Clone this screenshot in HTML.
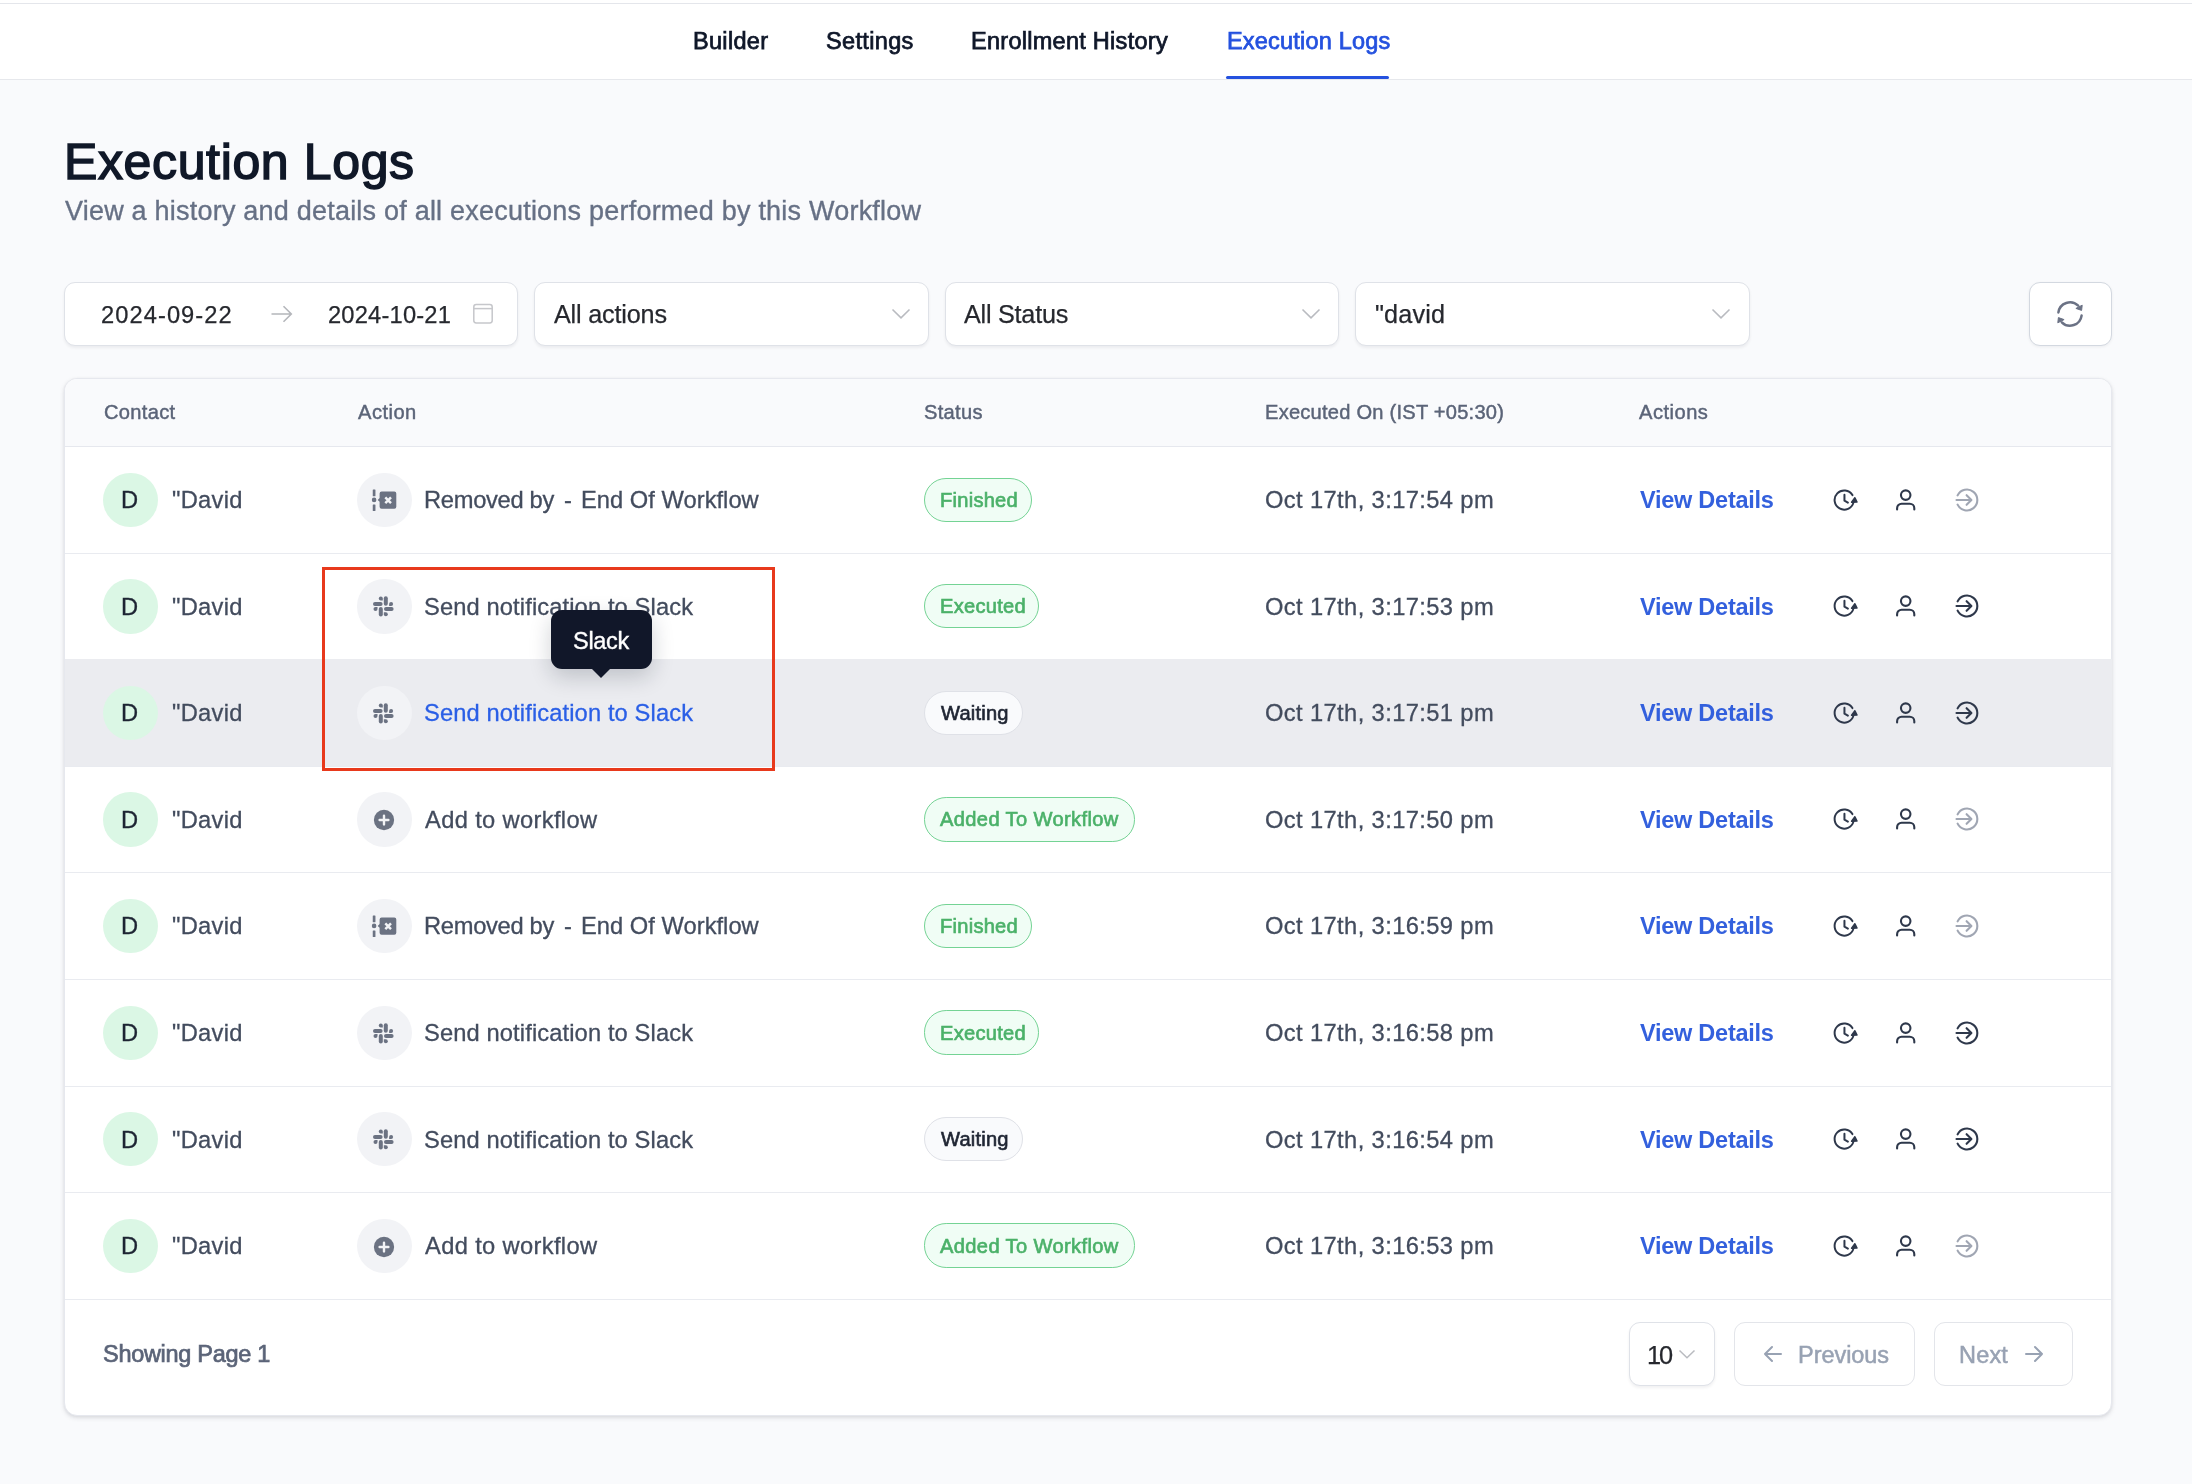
<!DOCTYPE html><html lang="en"><head><meta charset="utf-8"><title>Execution Logs</title><style>
*{box-sizing:border-box;margin:0;padding:0}
html,body{width:2192px;height:1484px;overflow:hidden}
body{background:#f9fafc;font-family:"Liberation Sans",sans-serif;position:relative;color:#344054}
.t{position:absolute;white-space:pre;display:block;will-change:transform}
.abs{position:absolute}
.nav{position:absolute;left:0;top:0;width:2192px;height:80px;background:#fff;border-top:1px solid #e9eaee;border-bottom:1px solid #e6e8ec}
.topstrip{position:absolute;left:0;top:0;width:2192px;height:3px;background:#fff}
.topline{position:absolute;left:0;top:3px;width:2192px;height:1px;background:#e4e6eb}
.uline{position:absolute;left:1226px;top:76px;width:163px;height:3.4px;background:#2451df;border-radius:2px}
.fbox{position:absolute;top:282px;height:64px;background:#fff;border:1px solid #dfe2e8;border-radius:11px;box-shadow:0 2px 3px rgba(16,24,40,.06)}
.card{position:absolute;left:64px;top:378px;width:2048px;height:1038px;background:#fff;border:1px solid #e6e8ee;border-radius:13px;box-shadow:0 2px 5px rgba(16,24,40,.10),0 1px 3px rgba(16,24,40,.06);overflow:hidden}
.thead{position:absolute;left:0;top:0;width:100%;height:68px;background:#f9fafc;border-bottom:1px solid #e6e8ee}
.rline{position:absolute;left:65px;width:2046px;height:1px;background:#e9ebf0}
.hover{position:absolute;left:65px;top:659px;width:2047px;height:108px;background:#ebecf0}
.av{position:absolute;width:54.4px;height:54.4px;border-radius:50%;background:#dbf7e5}
.ic{position:absolute;width:54.4px;height:54.4px;border-radius:50%;background:#f2f3f6}
.ic svg,.av svg{position:absolute;left:0;top:0}
.badge{position:absolute;height:44.4px;border-radius:22.2px;border:1.5px solid #74d394;background:#f0fdf5}
.badge.g{border:1px solid #dfe1e7;background:#f9fafc}
.btn{position:absolute;top:1322px;height:64px;background:#fff;border:1px solid #e3e5ea;border-radius:11px}
.red{position:absolute;left:322px;top:567px;width:453px;height:204px;border:3px solid #e8391c}
.tip{position:absolute;left:551.3px;top:610.2px;width:101px;height:58.6px;background:#111729;border-radius:11px;box-shadow:0 8px 22px rgba(16,24,40,.20)}
.tiparrow{position:absolute;left:591px;top:668.3px;width:0;height:0;border-left:10.5px solid transparent;border-right:10.5px solid transparent;border-top:10.7px solid #111729}
</style></head><body>
<div class="nav"></div><div class="topstrip"></div><div class="topline"></div>
<span id="t1" class="t " style="left:692.77px;top:25.32px;font-size:23.5px;line-height:33px;color:#0f1729;letter-spacing:0.308px;-webkit-text-stroke:0.75px #0f1729;">Builder</span>
<span id="t2" class="t " style="left:826.25px;top:25.32px;font-size:23.5px;line-height:33px;color:#0f1729;letter-spacing:0.348px;-webkit-text-stroke:0.75px #0f1729;">Settings</span>
<span id="t3" class="t " style="left:970.77px;top:25.32px;font-size:23.5px;line-height:33px;color:#0f1729;letter-spacing:0.274px;-webkit-text-stroke:0.75px #0f1729;">Enrollment History</span>
<span id="t4" class="t " style="left:1226.97px;top:25.32px;font-size:23.5px;line-height:33px;color:#2451df;letter-spacing:0.195px;-webkit-text-stroke:0.75px #2451df;">Execution Logs</span>
<div class="uline"></div>
<span id="t5" class="t " style="left:64.20px;top:127.18px;font-size:50px;line-height:70px;color:#101828;letter-spacing:0.631px;-webkit-text-stroke:1.5px #101828;">Execution Logs</span>
<span id="t6" class="t " style="left:65.29px;top:192.03px;font-size:27px;line-height:38px;color:#667085;letter-spacing:0.216px;-webkit-text-stroke:0.35px #667085;">View a history and details of all executions performed by this Workflow</span>
<div class="fbox" style="left:64px;width:454px"></div>
<div class="fbox" style="left:534px;width:395px"></div>
<div class="fbox" style="left:945px;width:394px"></div>
<div class="fbox" style="left:1355px;width:395px"></div>
<div class="fbox" style="left:2029px;width:83px;border-color:#d3d8e0;box-shadow:0 1px 3px rgba(16,24,40,.06)"></div>
<span id="t7" class="t " style="left:101.28px;top:298.52px;font-size:23.7px;line-height:33px;color:#26282e;letter-spacing:1.059px;-webkit-text-stroke:0.25px #26282e;">2024-09-22</span>
<span id="t8" class="t " style="left:327.68px;top:298.52px;font-size:23.7px;line-height:33px;color:#26282e;letter-spacing:0.190px;-webkit-text-stroke:0.25px #26282e;">2024-10-21</span>
<span id="t9" class="t " style="left:553.98px;top:296.74px;font-size:25.2px;line-height:35px;color:#26282e;letter-spacing:-0.179px;-webkit-text-stroke:0.25px #26282e;">All actions</span>
<span id="t10" class="t " style="left:963.98px;top:296.74px;font-size:25.2px;line-height:35px;color:#26282e;letter-spacing:-0.236px;-webkit-text-stroke:0.25px #26282e;">All Status</span>
<span id="t11" class="t " style="left:1374.74px;top:296.74px;font-size:25.2px;line-height:35px;color:#26282e;letter-spacing:0.166px;-webkit-text-stroke:0.25px #26282e;">"david</span>
<svg class="abs" style="left:270px;top:303px" width="24" height="22" viewBox="0 0 24 22"><path d="M1.5 11H21M13.5 3.2 21.3 11 13.5 18.8" fill="none" stroke="#b4b6bb" stroke-width="1.6" stroke-linecap="butt" stroke-linejoin="miter"/></svg>
<svg class="abs" style="left:471px;top:302px" width="24" height="24" viewBox="0 0 24 24"><rect x="2.8" y="2.5" width="18.4" height="18.5" rx="2.4" fill="none" stroke="#c6c7cb" stroke-width="1.5"/><path d="M2.8 6.6H21.2" stroke="#c6c7cb" stroke-width="1.5"/></svg>
<svg class="abs" style="left:890.5px;top:308px" width="20" height="12" viewBox="0 0 20 12"><path d="M1.5 1.5 10 9.8 18.5 1.5" fill="none" stroke="#b9bbc0" stroke-width="1.6"/></svg>
<svg class="abs" style="left:1300.5px;top:308px" width="20" height="12" viewBox="0 0 20 12"><path d="M1.5 1.5 10 9.8 18.5 1.5" fill="none" stroke="#b9bbc0" stroke-width="1.6"/></svg>
<svg class="abs" style="left:1711px;top:308px" width="20" height="12" viewBox="0 0 20 12"><path d="M1.5 1.5 10 9.8 18.5 1.5" fill="none" stroke="#b9bbc0" stroke-width="1.6"/></svg>
<svg class="abs" style="left:2050px;top:294px" width="40" height="40" viewBox="-20 -20 40 40"><g fill="none" stroke="#6b7285" stroke-width="2.5" stroke-linecap="round"><path d="M-11.6 -1.6A11.7 11.7 0 0 1 8.2 -8.3"/><path d="M11.6 1.6A11.7 11.7 0 0 1 -8.2 8.3"/></g><g fill="#6b7285" stroke="#6b7285" stroke-width="1" stroke-linejoin="round"><path d="M5.9 -5.6 12.2 -8.8 11.6 -3.6z"/><path d="M-5.9 5.6-12.2 8.8-11.6 3.6z"/></g></svg>
<div class="card"><div class="thead"></div></div>
<span id="t12" class="t " style="left:103.82px;top:397.95px;font-size:20.1px;line-height:28px;color:#5b6478;letter-spacing:0.312px;-webkit-text-stroke:0.45px #5b6478;">Contact</span>
<span id="t13" class="t " style="left:358.33px;top:397.95px;font-size:20.1px;line-height:28px;color:#5b6478;letter-spacing:0.488px;-webkit-text-stroke:0.45px #5b6478;">Action</span>
<span id="t14" class="t " style="left:924.03px;top:397.95px;font-size:20.1px;line-height:28px;color:#5b6478;letter-spacing:0.300px;-webkit-text-stroke:0.45px #5b6478;">Status</span>
<span id="t15" class="t " style="left:1264.64px;top:397.95px;font-size:20.1px;line-height:28px;color:#5b6478;letter-spacing:0.231px;-webkit-text-stroke:0.45px #5b6478;">Executed On (IST +05:30)</span>
<span id="t16" class="t " style="left:1639.33px;top:397.95px;font-size:20.1px;line-height:28px;color:#5b6478;letter-spacing:0.494px;-webkit-text-stroke:0.45px #5b6478;">Actions</span>
<div class="hover"></div>
<div class="rline" style="top:553px"></div>
<div class="rline" style="top:766px"></div>
<div class="rline" style="top:872px"></div>
<div class="rline" style="top:979px"></div>
<div class="rline" style="top:1086px"></div>
<div class="rline" style="top:1192px"></div>
<div class="rline" style="top:1299px"></div>
<div class="av" style="left:103.3px;top:472.7px"></div>
<span id="t17" class="t " style="left:121.42px;top:484.14px;font-size:23.7px;line-height:33px;color:#1d2433;letter-spacing:0.000px;-webkit-text-stroke:0.3px #1d2433;">D</span>
<span id="t18" class="t " style="left:171.62px;top:484.14px;font-size:23.7px;line-height:33px;color:#434c5e;letter-spacing:0.295px;-webkit-text-stroke:0.3px #434c5e;">"David</span>
<div class="ic" style="left:357.3px;top:472.7px"><svg width="55" height="55" viewBox="0 0 55 55"><g fill="#6b7282"><rect x="15.75" y="16.4" width="2.7" height="6.75" rx=".5"/><circle cx="17.1" cy="26.9" r="2.3"/><rect x="15.75" y="31.5" width="2.7" height="6.6" rx=".5"/><path d="M24.6 18.6h12.7a2 2 0 0 1 2 2v13.2a2 2 0 0 1-2 2H24.6a2 2 0 0 1-2-2v-5.1l-1.9-1.8 1.9-1.8v-4.5a2 2 0 0 1 2-2z"/></g><path d="M28.3 24.4 34 30.1M34 24.4 28.3 30.1" stroke="#f2f3f6" stroke-width="2.5" fill="none"/></svg></div>
<span id="t19" class="t " style="left:423.73px;top:484.14px;font-size:23.7px;line-height:33px;color:#434c5e;letter-spacing:-0.293px;-webkit-text-stroke:0.3px #434c5e;">Removed by</span>
<span id="t20" class="t " style="left:563.62px;top:484.14px;font-size:23.7px;line-height:33px;color:#434c5e;letter-spacing:0.000px;-webkit-text-stroke:0.3px #434c5e;">-</span>
<span id="t21" class="t " style="left:581.21px;top:484.14px;font-size:23.7px;line-height:33px;color:#434c5e;letter-spacing:0.032px;-webkit-text-stroke:0.3px #434c5e;">End Of Workflow</span>
<div class="badge" style="left:924px;top:477.5px;width:108px"></div>
<span id="t22" class="t " style="left:939.82px;top:486.15px;font-size:20.1px;line-height:28px;color:#4bb169;letter-spacing:0.253px;-webkit-text-stroke:0.65px #4bb169;">Finished</span>
<span id="t23" class="t " style="left:1264.69px;top:484.14px;font-size:23.7px;line-height:33px;color:#434c5e;letter-spacing:0.391px;-webkit-text-stroke:0.3px #434c5e;">Oct 17th, 3:17:54 pm</span>
<span id="t24" class="t " style="left:1639.85px;top:484.14px;font-size:23.5px;line-height:33px;color:#3360dd;letter-spacing:-0.257px;font-weight:bold;">View Details</span>
<svg class="abs" style="left:1830px;top:484.7px" width="30" height="30" viewBox="0 0 30 30" fill="none" stroke="#2e384b" stroke-width="2.0" stroke-linecap="round" stroke-linejoin="round"><path d="M22.43 10.11A9.6 9.6 0 1 0 23.51 17.37"/><path d="M14.45 9.85V15.65L17.9 17.6"/><path d="M24.9 12.7 21.6 17.3 27 17.1z" fill="#2e384b" stroke-width="1.5"/></svg><svg class="abs" style="left:1891px;top:484.7px" width="30" height="30" viewBox="0 0 30 30" fill="none" stroke="#2e384b" stroke-width="2.1" stroke-linecap="round" stroke-linejoin="round"><circle cx="14.7" cy="10.1" r="4.75"/><path d="M6.1 24.4v-1.2a4.5 4.5 0 0 1 4.5-4.5h8.2a4.5 4.5 0 0 1 4.5 4.5v1.2"/></svg><svg class="abs" style="left:1952px;top:484.7px" width="30" height="30" viewBox="0 0 30 30" fill="none" stroke="#a0a6b3" stroke-width="2.1" stroke-linecap="round" stroke-linejoin="round"><path d="M5.6 10.4a10.4 10.4 0 1 1 0 9.2"/><path d="M4.5 15h14.6M14.6 10.2l4.8 4.8-4.8 4.8"/></svg>
<div class="av" style="left:103.3px;top:579.2px"></div>
<span id="t25" class="t " style="left:121.42px;top:591.14px;font-size:23.7px;line-height:33px;color:#1d2433;letter-spacing:0.000px;-webkit-text-stroke:0.3px #1d2433;">D</span>
<span id="t26" class="t " style="left:171.62px;top:591.14px;font-size:23.7px;line-height:33px;color:#434c5e;letter-spacing:0.295px;-webkit-text-stroke:0.3px #434c5e;">"David</span>
<div class="ic" style="left:357.3px;top:579.2px"><svg width="55" height="55" viewBox="0 0 55 55"><g fill="#6b7282" transform="translate(-1.2 -0.2)"><rect x="28.0" y="17.5" width="4.0" height="9.4" rx="2"/><rect x="23.0" y="28.3" width="4.0" height="9.4" rx="2"/><rect x="17.2" y="23.1" width="9.6" height="4.0" rx="2"/><rect x="28.2" y="28.1" width="9.6" height="4.0" rx="2"/><path d="M27 21.7h-2a2 2 0 1 1 2-2z"/><path d="M33.3 27.1v-2a2 2 0 1 1 2 2z"/><path d="M28 33.5h2a2 2 0 1 1-2 2z"/><path d="M21.7 28.1v2a2 2 0 1 1-2-2z"/></g></svg></div>
<span id="t27" class="t " style="left:423.71px;top:591.14px;font-size:23.7px;line-height:33px;color:#434c5e;letter-spacing:0.121px;-webkit-text-stroke:0.3px #434c5e;">Send notification to Slack</span>
<div class="badge" style="left:924px;top:584px;width:115px"></div>
<span id="t28" class="t " style="left:939.82px;top:592.15px;font-size:20.1px;line-height:28px;color:#4bb169;letter-spacing:0.277px;-webkit-text-stroke:0.65px #4bb169;">Executed</span>
<span id="t29" class="t " style="left:1264.69px;top:591.14px;font-size:23.7px;line-height:33px;color:#434c5e;letter-spacing:0.391px;-webkit-text-stroke:0.3px #434c5e;">Oct 17th, 3:17:53 pm</span>
<span id="t30" class="t " style="left:1639.85px;top:591.14px;font-size:23.5px;line-height:33px;color:#3360dd;letter-spacing:-0.257px;font-weight:bold;">View Details</span>
<svg class="abs" style="left:1830px;top:591.2px" width="30" height="30" viewBox="0 0 30 30" fill="none" stroke="#2e384b" stroke-width="2.0" stroke-linecap="round" stroke-linejoin="round"><path d="M22.43 10.11A9.6 9.6 0 1 0 23.51 17.37"/><path d="M14.45 9.85V15.65L17.9 17.6"/><path d="M24.9 12.7 21.6 17.3 27 17.1z" fill="#2e384b" stroke-width="1.5"/></svg><svg class="abs" style="left:1891px;top:591.2px" width="30" height="30" viewBox="0 0 30 30" fill="none" stroke="#2e384b" stroke-width="2.1" stroke-linecap="round" stroke-linejoin="round"><circle cx="14.7" cy="10.1" r="4.75"/><path d="M6.1 24.4v-1.2a4.5 4.5 0 0 1 4.5-4.5h8.2a4.5 4.5 0 0 1 4.5 4.5v1.2"/></svg><svg class="abs" style="left:1952px;top:591.2px" width="30" height="30" viewBox="0 0 30 30" fill="none" stroke="#2e384b" stroke-width="2.1" stroke-linecap="round" stroke-linejoin="round"><path d="M5.6 10.4a10.4 10.4 0 1 1 0 9.2"/><path d="M4.5 15h14.6M14.6 10.2l4.8 4.8-4.8 4.8"/></svg>
<div class="av" style="left:103.3px;top:685.8px"></div>
<span id="t31" class="t " style="left:121.42px;top:697.04px;font-size:23.7px;line-height:33px;color:#1d2433;letter-spacing:0.000px;-webkit-text-stroke:0.3px #1d2433;">D</span>
<span id="t32" class="t " style="left:171.62px;top:697.04px;font-size:23.7px;line-height:33px;color:#434c5e;letter-spacing:0.295px;-webkit-text-stroke:0.3px #434c5e;">"David</span>
<div class="ic" style="left:357.3px;top:685.8px"><svg width="55" height="55" viewBox="0 0 55 55"><g fill="#6b7282" transform="translate(-1.2 -0.2)"><rect x="28.0" y="17.5" width="4.0" height="9.4" rx="2"/><rect x="23.0" y="28.3" width="4.0" height="9.4" rx="2"/><rect x="17.2" y="23.1" width="9.6" height="4.0" rx="2"/><rect x="28.2" y="28.1" width="9.6" height="4.0" rx="2"/><path d="M27 21.7h-2a2 2 0 1 1 2-2z"/><path d="M33.3 27.1v-2a2 2 0 1 1 2 2z"/><path d="M28 33.5h2a2 2 0 1 1-2 2z"/><path d="M21.7 28.1v2a2 2 0 1 1-2-2z"/></g></svg></div>
<span id="t33" class="t " style="left:423.71px;top:697.04px;font-size:23.7px;line-height:33px;color:#2a5fe6;letter-spacing:0.121px;-webkit-text-stroke:0.3px #2a5fe6;">Send notification to Slack</span>
<div class="badge g" style="left:924px;top:690.6px;width:99px"></div>
<span id="t34" class="t " style="left:940.90px;top:698.75px;font-size:20.1px;line-height:28px;color:#1f2533;letter-spacing:0.213px;-webkit-text-stroke:0.65px #1f2533;">Waiting</span>
<span id="t35" class="t " style="left:1264.69px;top:697.04px;font-size:23.7px;line-height:33px;color:#434c5e;letter-spacing:0.391px;-webkit-text-stroke:0.3px #434c5e;">Oct 17th, 3:17:51 pm</span>
<span id="t36" class="t " style="left:1639.85px;top:697.04px;font-size:23.5px;line-height:33px;color:#3360dd;letter-spacing:-0.257px;font-weight:bold;">View Details</span>
<svg class="abs" style="left:1830px;top:697.8px" width="30" height="30" viewBox="0 0 30 30" fill="none" stroke="#2e384b" stroke-width="2.0" stroke-linecap="round" stroke-linejoin="round"><path d="M22.43 10.11A9.6 9.6 0 1 0 23.51 17.37"/><path d="M14.45 9.85V15.65L17.9 17.6"/><path d="M24.9 12.7 21.6 17.3 27 17.1z" fill="#2e384b" stroke-width="1.5"/></svg><svg class="abs" style="left:1891px;top:697.8px" width="30" height="30" viewBox="0 0 30 30" fill="none" stroke="#2e384b" stroke-width="2.1" stroke-linecap="round" stroke-linejoin="round"><circle cx="14.7" cy="10.1" r="4.75"/><path d="M6.1 24.4v-1.2a4.5 4.5 0 0 1 4.5-4.5h8.2a4.5 4.5 0 0 1 4.5 4.5v1.2"/></svg><svg class="abs" style="left:1952px;top:697.8px" width="30" height="30" viewBox="0 0 30 30" fill="none" stroke="#2e384b" stroke-width="2.1" stroke-linecap="round" stroke-linejoin="round"><path d="M5.6 10.4a10.4 10.4 0 1 1 0 9.2"/><path d="M4.5 15h14.6M14.6 10.2l4.8 4.8-4.8 4.8"/></svg>
<div class="av" style="left:103.3px;top:792.4px"></div>
<span id="t37" class="t " style="left:121.42px;top:804.34px;font-size:23.7px;line-height:33px;color:#1d2433;letter-spacing:0.000px;-webkit-text-stroke:0.3px #1d2433;">D</span>
<span id="t38" class="t " style="left:171.62px;top:804.34px;font-size:23.7px;line-height:33px;color:#434c5e;letter-spacing:0.295px;-webkit-text-stroke:0.3px #434c5e;">"David</span>
<div class="ic" style="left:357.3px;top:792.4px"><svg width="55" height="55" viewBox="0 0 55 55"><circle cx="27.0" cy="28.0" r="10.15" fill="#6b7282"/><path d="M27 23.6v8.8M22.6 28h8.8" stroke="#f2f3f6" stroke-width="2.4" stroke-linecap="round"/></svg></div>
<span id="t39" class="t " style="left:424.86px;top:804.34px;font-size:23.7px;line-height:33px;color:#434c5e;letter-spacing:0.350px;-webkit-text-stroke:0.3px #434c5e;">Add to workflow</span>
<div class="badge" style="left:924px;top:797.2px;width:211px"></div>
<span id="t40" class="t " style="left:940.35px;top:805.35px;font-size:20.1px;line-height:28px;color:#4bb169;letter-spacing:0.373px;-webkit-text-stroke:0.65px #4bb169;">Added To Workflow</span>
<span id="t41" class="t " style="left:1264.69px;top:804.34px;font-size:23.7px;line-height:33px;color:#434c5e;letter-spacing:0.391px;-webkit-text-stroke:0.3px #434c5e;">Oct 17th, 3:17:50 pm</span>
<span id="t42" class="t " style="left:1639.85px;top:804.34px;font-size:23.5px;line-height:33px;color:#3360dd;letter-spacing:-0.257px;font-weight:bold;">View Details</span>
<svg class="abs" style="left:1830px;top:804.4px" width="30" height="30" viewBox="0 0 30 30" fill="none" stroke="#2e384b" stroke-width="2.0" stroke-linecap="round" stroke-linejoin="round"><path d="M22.43 10.11A9.6 9.6 0 1 0 23.51 17.37"/><path d="M14.45 9.85V15.65L17.9 17.6"/><path d="M24.9 12.7 21.6 17.3 27 17.1z" fill="#2e384b" stroke-width="1.5"/></svg><svg class="abs" style="left:1891px;top:804.4px" width="30" height="30" viewBox="0 0 30 30" fill="none" stroke="#2e384b" stroke-width="2.1" stroke-linecap="round" stroke-linejoin="round"><circle cx="14.7" cy="10.1" r="4.75"/><path d="M6.1 24.4v-1.2a4.5 4.5 0 0 1 4.5-4.5h8.2a4.5 4.5 0 0 1 4.5 4.5v1.2"/></svg><svg class="abs" style="left:1952px;top:804.4px" width="30" height="30" viewBox="0 0 30 30" fill="none" stroke="#a0a6b3" stroke-width="2.1" stroke-linecap="round" stroke-linejoin="round"><path d="M5.6 10.4a10.4 10.4 0 1 1 0 9.2"/><path d="M4.5 15h14.6M14.6 10.2l4.8 4.8-4.8 4.8"/></svg>
<div class="av" style="left:103.3px;top:898.9px"></div>
<span id="t43" class="t " style="left:121.42px;top:910.34px;font-size:23.7px;line-height:33px;color:#1d2433;letter-spacing:0.000px;-webkit-text-stroke:0.3px #1d2433;">D</span>
<span id="t44" class="t " style="left:171.62px;top:910.34px;font-size:23.7px;line-height:33px;color:#434c5e;letter-spacing:0.295px;-webkit-text-stroke:0.3px #434c5e;">"David</span>
<div class="ic" style="left:357.3px;top:898.9px"><svg width="55" height="55" viewBox="0 0 55 55"><g fill="#6b7282"><rect x="15.75" y="16.4" width="2.7" height="6.75" rx=".5"/><circle cx="17.1" cy="26.9" r="2.3"/><rect x="15.75" y="31.5" width="2.7" height="6.6" rx=".5"/><path d="M24.6 18.6h12.7a2 2 0 0 1 2 2v13.2a2 2 0 0 1-2 2H24.6a2 2 0 0 1-2-2v-5.1l-1.9-1.8 1.9-1.8v-4.5a2 2 0 0 1 2-2z"/></g><path d="M28.3 24.4 34 30.1M34 24.4 28.3 30.1" stroke="#f2f3f6" stroke-width="2.5" fill="none"/></svg></div>
<span id="t45" class="t " style="left:423.73px;top:910.34px;font-size:23.7px;line-height:33px;color:#434c5e;letter-spacing:-0.293px;-webkit-text-stroke:0.3px #434c5e;">Removed by</span>
<span id="t46" class="t " style="left:563.62px;top:910.34px;font-size:23.7px;line-height:33px;color:#434c5e;letter-spacing:0.000px;-webkit-text-stroke:0.3px #434c5e;">-</span>
<span id="t47" class="t " style="left:581.21px;top:910.34px;font-size:23.7px;line-height:33px;color:#434c5e;letter-spacing:0.032px;-webkit-text-stroke:0.3px #434c5e;">End Of Workflow</span>
<div class="badge" style="left:924px;top:903.7px;width:108px"></div>
<span id="t48" class="t " style="left:939.82px;top:912.35px;font-size:20.1px;line-height:28px;color:#4bb169;letter-spacing:0.253px;-webkit-text-stroke:0.65px #4bb169;">Finished</span>
<span id="t49" class="t " style="left:1264.69px;top:910.34px;font-size:23.7px;line-height:33px;color:#434c5e;letter-spacing:0.391px;-webkit-text-stroke:0.3px #434c5e;">Oct 17th, 3:16:59 pm</span>
<span id="t50" class="t " style="left:1639.85px;top:910.34px;font-size:23.5px;line-height:33px;color:#3360dd;letter-spacing:-0.257px;font-weight:bold;">View Details</span>
<svg class="abs" style="left:1830px;top:910.9px" width="30" height="30" viewBox="0 0 30 30" fill="none" stroke="#2e384b" stroke-width="2.0" stroke-linecap="round" stroke-linejoin="round"><path d="M22.43 10.11A9.6 9.6 0 1 0 23.51 17.37"/><path d="M14.45 9.85V15.65L17.9 17.6"/><path d="M24.9 12.7 21.6 17.3 27 17.1z" fill="#2e384b" stroke-width="1.5"/></svg><svg class="abs" style="left:1891px;top:910.9px" width="30" height="30" viewBox="0 0 30 30" fill="none" stroke="#2e384b" stroke-width="2.1" stroke-linecap="round" stroke-linejoin="round"><circle cx="14.7" cy="10.1" r="4.75"/><path d="M6.1 24.4v-1.2a4.5 4.5 0 0 1 4.5-4.5h8.2a4.5 4.5 0 0 1 4.5 4.5v1.2"/></svg><svg class="abs" style="left:1952px;top:910.9px" width="30" height="30" viewBox="0 0 30 30" fill="none" stroke="#a0a6b3" stroke-width="2.1" stroke-linecap="round" stroke-linejoin="round"><path d="M5.6 10.4a10.4 10.4 0 1 1 0 9.2"/><path d="M4.5 15h14.6M14.6 10.2l4.8 4.8-4.8 4.8"/></svg>
<div class="av" style="left:103.3px;top:1005.5px"></div>
<span id="t51" class="t " style="left:121.42px;top:1016.94px;font-size:23.7px;line-height:33px;color:#1d2433;letter-spacing:0.000px;-webkit-text-stroke:0.3px #1d2433;">D</span>
<span id="t52" class="t " style="left:171.62px;top:1016.94px;font-size:23.7px;line-height:33px;color:#434c5e;letter-spacing:0.295px;-webkit-text-stroke:0.3px #434c5e;">"David</span>
<div class="ic" style="left:357.3px;top:1005.5px"><svg width="55" height="55" viewBox="0 0 55 55"><g fill="#6b7282" transform="translate(-1.2 -0.2)"><rect x="28.0" y="17.5" width="4.0" height="9.4" rx="2"/><rect x="23.0" y="28.3" width="4.0" height="9.4" rx="2"/><rect x="17.2" y="23.1" width="9.6" height="4.0" rx="2"/><rect x="28.2" y="28.1" width="9.6" height="4.0" rx="2"/><path d="M27 21.7h-2a2 2 0 1 1 2-2z"/><path d="M33.3 27.1v-2a2 2 0 1 1 2 2z"/><path d="M28 33.5h2a2 2 0 1 1-2 2z"/><path d="M21.7 28.1v2a2 2 0 1 1-2-2z"/></g></svg></div>
<span id="t53" class="t " style="left:423.71px;top:1016.94px;font-size:23.7px;line-height:33px;color:#434c5e;letter-spacing:0.121px;-webkit-text-stroke:0.3px #434c5e;">Send notification to Slack</span>
<div class="badge" style="left:924px;top:1010.3px;width:115px"></div>
<span id="t54" class="t " style="left:939.82px;top:1018.95px;font-size:20.1px;line-height:28px;color:#4bb169;letter-spacing:0.277px;-webkit-text-stroke:0.65px #4bb169;">Executed</span>
<span id="t55" class="t " style="left:1264.69px;top:1016.94px;font-size:23.7px;line-height:33px;color:#434c5e;letter-spacing:0.391px;-webkit-text-stroke:0.3px #434c5e;">Oct 17th, 3:16:58 pm</span>
<span id="t56" class="t " style="left:1639.85px;top:1016.94px;font-size:23.5px;line-height:33px;color:#3360dd;letter-spacing:-0.257px;font-weight:bold;">View Details</span>
<svg class="abs" style="left:1830px;top:1017.5px" width="30" height="30" viewBox="0 0 30 30" fill="none" stroke="#2e384b" stroke-width="2.0" stroke-linecap="round" stroke-linejoin="round"><path d="M22.43 10.11A9.6 9.6 0 1 0 23.51 17.37"/><path d="M14.45 9.85V15.65L17.9 17.6"/><path d="M24.9 12.7 21.6 17.3 27 17.1z" fill="#2e384b" stroke-width="1.5"/></svg><svg class="abs" style="left:1891px;top:1017.5px" width="30" height="30" viewBox="0 0 30 30" fill="none" stroke="#2e384b" stroke-width="2.1" stroke-linecap="round" stroke-linejoin="round"><circle cx="14.7" cy="10.1" r="4.75"/><path d="M6.1 24.4v-1.2a4.5 4.5 0 0 1 4.5-4.5h8.2a4.5 4.5 0 0 1 4.5 4.5v1.2"/></svg><svg class="abs" style="left:1952px;top:1017.5px" width="30" height="30" viewBox="0 0 30 30" fill="none" stroke="#2e384b" stroke-width="2.1" stroke-linecap="round" stroke-linejoin="round"><path d="M5.6 10.4a10.4 10.4 0 1 1 0 9.2"/><path d="M4.5 15h14.6M14.6 10.2l4.8 4.8-4.8 4.8"/></svg>
<div class="av" style="left:103.3px;top:1112.1px"></div>
<span id="t57" class="t " style="left:121.42px;top:1123.54px;font-size:23.7px;line-height:33px;color:#1d2433;letter-spacing:0.000px;-webkit-text-stroke:0.3px #1d2433;">D</span>
<span id="t58" class="t " style="left:171.62px;top:1123.54px;font-size:23.7px;line-height:33px;color:#434c5e;letter-spacing:0.295px;-webkit-text-stroke:0.3px #434c5e;">"David</span>
<div class="ic" style="left:357.3px;top:1112.1px"><svg width="55" height="55" viewBox="0 0 55 55"><g fill="#6b7282" transform="translate(-1.2 -0.2)"><rect x="28.0" y="17.5" width="4.0" height="9.4" rx="2"/><rect x="23.0" y="28.3" width="4.0" height="9.4" rx="2"/><rect x="17.2" y="23.1" width="9.6" height="4.0" rx="2"/><rect x="28.2" y="28.1" width="9.6" height="4.0" rx="2"/><path d="M27 21.7h-2a2 2 0 1 1 2-2z"/><path d="M33.3 27.1v-2a2 2 0 1 1 2 2z"/><path d="M28 33.5h2a2 2 0 1 1-2 2z"/><path d="M21.7 28.1v2a2 2 0 1 1-2-2z"/></g></svg></div>
<span id="t59" class="t " style="left:423.71px;top:1123.54px;font-size:23.7px;line-height:33px;color:#434c5e;letter-spacing:0.121px;-webkit-text-stroke:0.3px #434c5e;">Send notification to Slack</span>
<div class="badge g" style="left:924px;top:1116.9px;width:99px"></div>
<span id="t60" class="t " style="left:940.90px;top:1124.65px;font-size:20.1px;line-height:28px;color:#1f2533;letter-spacing:0.213px;-webkit-text-stroke:0.65px #1f2533;">Waiting</span>
<span id="t61" class="t " style="left:1264.69px;top:1123.54px;font-size:23.7px;line-height:33px;color:#434c5e;letter-spacing:0.391px;-webkit-text-stroke:0.3px #434c5e;">Oct 17th, 3:16:54 pm</span>
<span id="t62" class="t " style="left:1639.85px;top:1123.54px;font-size:23.5px;line-height:33px;color:#3360dd;letter-spacing:-0.257px;font-weight:bold;">View Details</span>
<svg class="abs" style="left:1830px;top:1124.1px" width="30" height="30" viewBox="0 0 30 30" fill="none" stroke="#2e384b" stroke-width="2.0" stroke-linecap="round" stroke-linejoin="round"><path d="M22.43 10.11A9.6 9.6 0 1 0 23.51 17.37"/><path d="M14.45 9.85V15.65L17.9 17.6"/><path d="M24.9 12.7 21.6 17.3 27 17.1z" fill="#2e384b" stroke-width="1.5"/></svg><svg class="abs" style="left:1891px;top:1124.1px" width="30" height="30" viewBox="0 0 30 30" fill="none" stroke="#2e384b" stroke-width="2.1" stroke-linecap="round" stroke-linejoin="round"><circle cx="14.7" cy="10.1" r="4.75"/><path d="M6.1 24.4v-1.2a4.5 4.5 0 0 1 4.5-4.5h8.2a4.5 4.5 0 0 1 4.5 4.5v1.2"/></svg><svg class="abs" style="left:1952px;top:1124.1px" width="30" height="30" viewBox="0 0 30 30" fill="none" stroke="#2e384b" stroke-width="2.1" stroke-linecap="round" stroke-linejoin="round"><path d="M5.6 10.4a10.4 10.4 0 1 1 0 9.2"/><path d="M4.5 15h14.6M14.6 10.2l4.8 4.8-4.8 4.8"/></svg>
<div class="av" style="left:103.3px;top:1218.6px"></div>
<span id="t63" class="t " style="left:121.42px;top:1229.64px;font-size:23.7px;line-height:33px;color:#1d2433;letter-spacing:0.000px;-webkit-text-stroke:0.3px #1d2433;">D</span>
<span id="t64" class="t " style="left:171.62px;top:1229.64px;font-size:23.7px;line-height:33px;color:#434c5e;letter-spacing:0.295px;-webkit-text-stroke:0.3px #434c5e;">"David</span>
<div class="ic" style="left:357.3px;top:1218.6px"><svg width="55" height="55" viewBox="0 0 55 55"><circle cx="27.0" cy="28.0" r="10.15" fill="#6b7282"/><path d="M27 23.6v8.8M22.6 28h8.8" stroke="#f2f3f6" stroke-width="2.4" stroke-linecap="round"/></svg></div>
<span id="t65" class="t " style="left:424.86px;top:1229.64px;font-size:23.7px;line-height:33px;color:#434c5e;letter-spacing:0.350px;-webkit-text-stroke:0.3px #434c5e;">Add to workflow</span>
<div class="badge" style="left:924px;top:1223.4px;width:211px"></div>
<span id="t66" class="t " style="left:940.35px;top:1231.55px;font-size:20.1px;line-height:28px;color:#4bb169;letter-spacing:0.373px;-webkit-text-stroke:0.65px #4bb169;">Added To Workflow</span>
<span id="t67" class="t " style="left:1264.69px;top:1229.64px;font-size:23.7px;line-height:33px;color:#434c5e;letter-spacing:0.391px;-webkit-text-stroke:0.3px #434c5e;">Oct 17th, 3:16:53 pm</span>
<span id="t68" class="t " style="left:1639.85px;top:1229.64px;font-size:23.5px;line-height:33px;color:#3360dd;letter-spacing:-0.257px;font-weight:bold;">View Details</span>
<svg class="abs" style="left:1830px;top:1230.6px" width="30" height="30" viewBox="0 0 30 30" fill="none" stroke="#2e384b" stroke-width="2.0" stroke-linecap="round" stroke-linejoin="round"><path d="M22.43 10.11A9.6 9.6 0 1 0 23.51 17.37"/><path d="M14.45 9.85V15.65L17.9 17.6"/><path d="M24.9 12.7 21.6 17.3 27 17.1z" fill="#2e384b" stroke-width="1.5"/></svg><svg class="abs" style="left:1891px;top:1230.6px" width="30" height="30" viewBox="0 0 30 30" fill="none" stroke="#2e384b" stroke-width="2.1" stroke-linecap="round" stroke-linejoin="round"><circle cx="14.7" cy="10.1" r="4.75"/><path d="M6.1 24.4v-1.2a4.5 4.5 0 0 1 4.5-4.5h8.2a4.5 4.5 0 0 1 4.5 4.5v1.2"/></svg><svg class="abs" style="left:1952px;top:1230.6px" width="30" height="30" viewBox="0 0 30 30" fill="none" stroke="#a0a6b3" stroke-width="2.1" stroke-linecap="round" stroke-linejoin="round"><path d="M5.6 10.4a10.4 10.4 0 1 1 0 9.2"/><path d="M4.5 15h14.6M14.6 10.2l4.8 4.8-4.8 4.8"/></svg>
<span id="t69" class="t " style="left:103.17px;top:1338.44px;font-size:23.5px;line-height:33px;color:#5b6478;letter-spacing:-0.298px;-webkit-text-stroke:0.7px #5b6478;">Showing Page 1</span>
<div class="btn" style="left:1629px;width:86px;border-color:#dfe2e8;box-shadow:0 2px 3px rgba(16,24,40,.06)"></div>
<div class="btn" style="left:1734px;width:181px"></div>
<div class="btn" style="left:1934px;width:139px"></div>
<span id="t70" class="t " style="left:1647.46px;top:1337.14px;font-size:25.4px;line-height:36px;color:#26282e;letter-spacing:-2.172px;-webkit-text-stroke:0.25px #26282e;">10</span>
<svg class="abs" style="left:1678px;top:1349px" width="18" height="11" viewBox="0 0 18 11"><path d="M1.5 1.5 9 8.8 16.5 1.5" fill="none" stroke="#b9bbc0" stroke-width="1.5"/></svg>
<span id="t71" class="t " style="left:1797.73px;top:1338.94px;font-size:23.5px;line-height:33px;color:#98a2b3;letter-spacing:-0.047px;-webkit-text-stroke:0.5px #98a2b3;">Previous</span>
<span id="t72" class="t " style="left:1959.43px;top:1338.94px;font-size:23.5px;line-height:33px;color:#98a2b3;letter-spacing:0.190px;-webkit-text-stroke:0.5px #98a2b3;">Next</span>
<svg class="abs" style="left:1762px;top:1343px" width="22" height="22" viewBox="0 0 22 22" fill="none" stroke="#98a2b3" stroke-width="2" stroke-linecap="round" stroke-linejoin="round"><path d="M19 11H3M10 4 3 11l7 7"/></svg>
<svg class="abs" style="left:2023px;top:1343px" width="22" height="22" viewBox="0 0 22 22" fill="none" stroke="#98a2b3" stroke-width="2" stroke-linecap="round" stroke-linejoin="round"><path d="M3 11h16M12 4l7 7-7 7"/></svg>
<div class="red"></div>
<div class="tip"></div><div class="tiparrow"></div>
<span id="t73" class="t " style="left:572.91px;top:625.04px;font-size:23.5px;line-height:33px;color:#ffffff;letter-spacing:-0.289px;-webkit-text-stroke:0.4px #ffffff;">Slack</span>
</body></html>
